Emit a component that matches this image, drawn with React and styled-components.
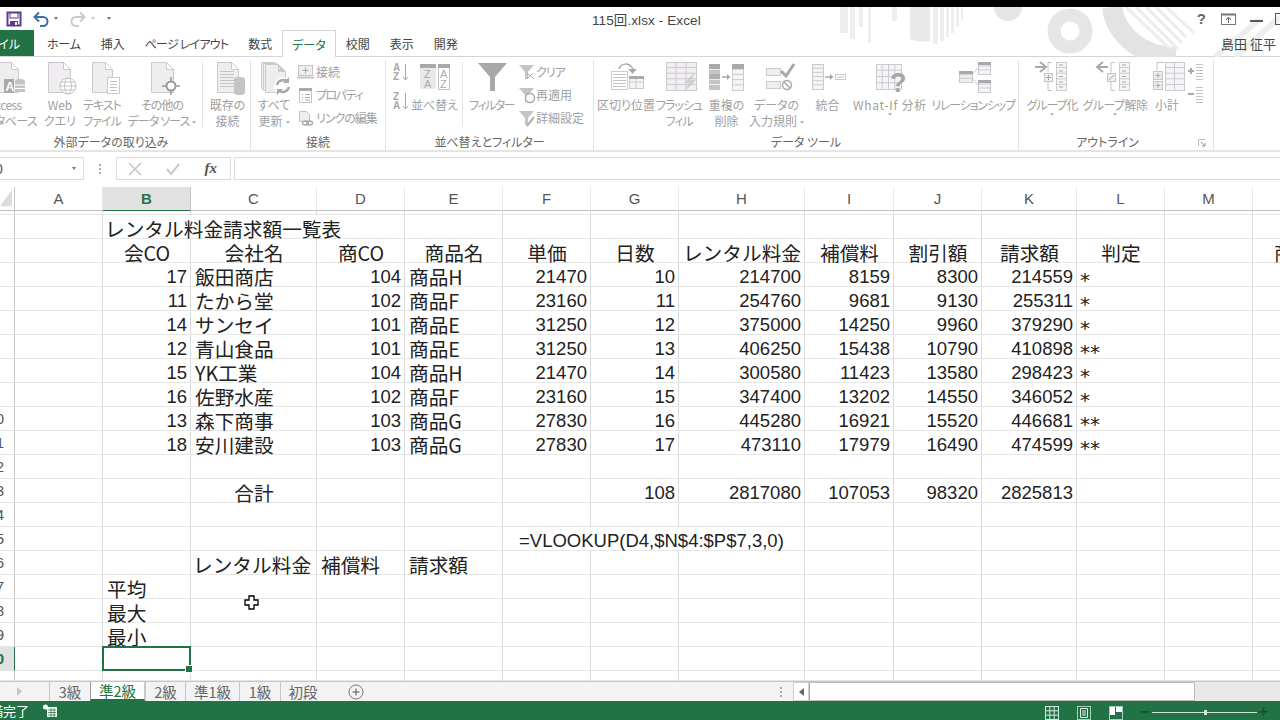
import React from "react";
import styled, { createGlobalStyle } from "styled-components";

const CJK = '"Noto Sans CJK JP", "Liberation Sans", sans-serif';
const LAT = '"Liberation Sans", "Noto Sans CJK JP", sans-serif';
const OUT = "#cdcacf";
const PALE = "#efedf0";
const MID = "#c4c4c4";
const DK = "#a9a9a9";
const GREEN = "#217346";

const Global = createGlobalStyle`
  html, body { margin: 0; padding: 0; background: #fff; }
  * { box-sizing: border-box; }
`;

const Page = styled.div`
  width: 1280px;
  height: 720px;
  display: flex;
  flex-direction: column;
  overflow: hidden;
  background: #fff;
  font-family: ${CJK};
  font-feature-settings: "palt";
`;
const BlackBar = styled.div`
  height: 7px;
  flex: none;
  background: #000;
`;
const Header = styled.header`
  position: relative;
  height: 50px;
  flex: none;
  display: flex;
  flex-direction: column;
  border-bottom: 1px solid #d4d4d4;
`;
const Pattern = styled.svg`
  position: absolute;
  left: 830px;
  top: 0;
`;
const TitleBar = styled.div`
  position: relative;
  height: 24px;
  display: grid;
  grid-template-columns: 592px auto 1fr;
  align-items: center;
`;
const Qat = styled.div`
  display: flex;
  align-items: center;
  padding-left: 6px;
  gap: 2px;
`;
const QatCaret = styled.span`
  width: 0;
  height: 0;
  margin: 0 ${(p) => p.$m ?? 6}px 0 3px;
  border-left: 2.5px solid transparent;
  border-right: 2.5px solid transparent;
  border-top: 3px solid ${(p) => p.$c || "#777"};
`;
const UndoIcon = styled.svg`
  margin-left: 9px;
`;
const Title = styled.div`
  font-size: 13.5px;
  color: #444;
  font-family: ${LAT};
  letter-spacing: 0.1px;
`;
const WinControls = styled.div`
  display: flex;
  justify-content: flex-end;
  align-items: center;
  gap: 12px;
  margin-right: -8px;
  color: #555;
`;
const Help = styled.span`
  font: 700 15px ${LAT};
  color: #666;
  margin-right: 3px;
`;
const MinimizeIcon = styled.svg`
  margin: 6px 0 0 2px;
`;
const TabRow = styled.nav`
  position: relative;
  flex: 1;
  display: flex;
  align-items: stretch;
  font-size: 12px;
  color: #444;
`;
const FileTab = styled.div`
  width: 34px;
  display: flex;
  justify-content: flex-end;
  align-items: center;
  overflow: hidden;
  padding-right: 14px;
  margin-right: 3px;
  background: ${GREEN};
  color: #fff;
  white-space: nowrap;
`;
const Tab = styled.div`
  padding: 0 10px;
  display: flex;
  align-items: center;
  white-space: nowrap;
  letter-spacing: ${(p) => p.$ls ?? 0}px;
  ${(p) =>
    p.$active &&
    `color:${GREEN};background:#fff;border:1px solid #d4d4d4;border-bottom:0;margin:0 0 -1px;padding:0 9px;height:27px;`}
`;
const UserName = styled.div`
  margin-left: auto;
  padding-right: 4px;
  align-self: center;
  font-size: 13px;
  color: #444;
  white-space: pre;
`;
const Ribbon = styled.section`
  height: 95px;
  flex: none;
  display: flex;
  border-bottom: 2px solid #e4e4e4;
  color: #a0a0a0;
  font-size: 12px;
`;
const Group = styled.div`
  position: relative;
  width: ${(p) => p.$w}px;
  flex: none;
  display: flex;
  flex-direction: column;
  margin-top: 3px;
  border-right: 1px solid #e2e2e2;
`;
const GroupBody = styled.div`
  flex: 1;
  min-height: 0;
  display: flex;
  justify-content: flex-end;
  overflow: hidden;
`;
const GroupLabel = styled.div`
  height: 17px;
  flex: none;
  line-height: 17px;
  text-align: center;
  font-size: 12px;
  color: #666;
  white-space: nowrap;
  padding-right: ${(p) => p.$shift || 0}px;
`;
const BigButton = styled.div`
  width: ${(p) => p.$w}px;
  flex: none;
  display: flex;
  flex-direction: column;
  align-items: center;
  text-align: center;
`;
const IconSlot = styled.div`
  width: 44px;
  height: 37px;
  flex: none;
`;
const BigLabel = styled.div`
  line-height: 16px;
  white-space: nowrap;
  letter-spacing: ${(p) => p.$ls || 0}px;
`;
const Caret = styled.span`
  display: inline-block;
  width: 0;
  height: 0;
  vertical-align: middle;
  margin-left: ${(p) => p.$ml ?? 3}px;
  border-left: 2.5px solid transparent;
  border-right: 2.5px solid transparent;
  border-top: 3px solid #b5b5b5;
`;
const InnerSep = styled.div`
  width: 1px;
  flex: none;
  margin: 2px ${(p) => p.$r || 2}px 6px ${(p) => p.$l || 2}px;
  background: #e4e4e4;
`;
const SmallColumn = styled.div`
  width: ${(p) => p.$w}px;
  flex: none;
  display: flex;
  flex-direction: column;
  padding-left: ${(p) => p.$pl || 0}px;
  gap: ${(p) => p.$gap || 0}px;
`;
const SmallItem = styled.div`
  height: 23px;
  display: flex;
  align-items: center;
  gap: ${(p) => p.$gap ?? 2}px;
  white-space: nowrap;
  letter-spacing: ${(p) => p.$ls || 0}px;
`;
const Launcher = styled.svg`
  position: absolute;
  right: 7px;
  bottom: 3px;
`;
const Gap = styled.div`
  height: ${(p) => p.$h}px;
  flex: none;
`;
const FormulaBar = styled.div`
  height: 23px;
  flex: none;
  display: flex;
  align-items: stretch;
`;
const NameBox = styled.div`
  width: 84px;
  display: flex;
  justify-content: space-between;
  align-items: center;
  padding-right: 7px;
  border: 1px solid #dcdcdc;
  border-left: 0;
  color: #555;
  font: 14px ${LAT};
`;
const NameClip = styled.span`
  margin-left: -5px;
`;
const Dots = styled.div`
  width: 32px;
  display: flex;
  flex-direction: column;
  align-items: center;
  justify-content: center;
  gap: 2px;
`;
const Dot = styled.i`
  width: 2px;
  height: 2px;
  background: #aaa;
`;
const FxBox = styled.div`
  width: 115px;
  margin-right: 3px;
  display: flex;
  align-items: center;
  justify-content: space-between;
  padding: 0 13px 0 11px;
  border: 1px solid #dcdcdc;
`;
const Fx = styled.span`
  font: italic 700 15px "Liberation Serif", serif;
  color: #555;
`;
const FormulaInput = styled.div`
  flex: 1;
  border: 1px solid #dcdcdc;
  border-right: 0;
`;
const Sheet = styled.div`
  position: relative;
  flex: 1;
  min-height: 0;
  overflow: hidden;
  display: grid;
  grid-template-columns: 15px 88px 88px 126px 88px 98px 88px 88px 126px 89px 88px 95px 88px 88px 88px;
  grid-template-rows: 24px 4px repeat(19, 24px) 10px;
`;
const Corner = styled.div`
  border-right: 1px solid #c6c6c6;
  border-bottom: 1px solid #bfbfbf;
  display: flex;
  align-items: flex-end;
  justify-content: flex-end;
  padding: 0 2px 3px 0;
`;
const ColHead = styled.div`
  display: flex;
  align-items: center;
  justify-content: center;
  font: ${(p) => (p.$sel ? 700 : 400)} 15px ${LAT};
  color: ${(p) => (p.$sel ? GREEN : "#555")};
  background: ${(p) => (p.$sel ? "#e1e1e1" : "#fff")};
  border-right: 1px solid ${(p) => (p.$sel ? "#c8c8c8" : "#e8e8e8")};
  border-bottom: 1px solid ${(p) => (p.$sel ? GREEN : "#bfbfbf")};
`;
const RowHead = styled.div`
  display: flex;
  justify-content: flex-end;
  align-items: center;
  overflow: hidden;
  padding-right: 10px;
  font: ${(p) => (p.$sel ? 700 : 400)} 15px ${LAT};
  color: ${(p) => (p.$sel ? GREEN : "#555")};
  background: ${(p) => (p.$sel ? "#e1e1e1" : "#fff")};
  border-right: 1px solid ${(p) => (p.$sel ? GREEN : "#c6c6c6")};
  border-bottom: 1px solid #e6e6e6;
`;
const Cell = styled.div`
  position: relative;
  grid-column: span ${(p) => p.$span || 1};
  display: flex;
  align-items: flex-end;
  justify-content: ${(p) =>
    p.$a === "r" ? "flex-end" : p.$a === "c" ? "center" : "flex-start"};
  padding: 0 3px 0 ${(p) => p.$pl ?? 4}px;
  border-right: 1px solid #dadada;
  border-bottom: 1px solid #e6e6e6;
  white-space: nowrap;
  color: #222;
  line-height: 18px;
  font-family: ${(p) => (p.$num ? LAT : CJK)};
  font-size: ${(p) => (p.$num ? "18.5px" : "19.7px")};
  font-feature-settings: normal;
`;
const Mark = styled.span`
  font: 20px/18px "DejaVu Sans", sans-serif;
  transform: translateY(3px);
`;
const SelectBox = styled.div`
  position: absolute;
  inset: -1px -1px -1px -1px;
  border: 2px solid ${GREEN};
  background: #fff;
  z-index: 2;
  &::after {
    content: "";
    position: absolute;
    right: -4px;
    bottom: -4px;
    width: 6px;
    height: 6px;
    background: ${GREEN};
    border: 1px solid #fff;
  }
`;
const CursorIcon = styled.svg`
  position: absolute;
  left: 244px;
  top: 408px;
  z-index: 3;
`;
const TabsBar = styled.div`
  height: 20px;
  flex: none;
  display: flex;
  align-items: stretch;
  background: #f3f3f3;
  border-top: 1px solid #c6c6c6;
  font-size: 14.5px;
  color: #666;
`;
const Nav = styled.div`
  width: 49px;
  display: flex;
  align-items: center;
  justify-content: flex-end;
  padding-right: 27px;
`;
const SheetTab = styled.div`
  width: ${(p) => p.$w}px;
  flex: none;
  display: flex;
  align-items: center;
  justify-content: center;
  white-space: nowrap;
  border-left: 1px solid ${(p) => (p.$active ? "transparent" : "#c8c8c8")};
  ${(p) =>
    p.$active &&
    `background:#fff;color:${GREEN};border-bottom:2px solid ${GREEN};border-left:1px solid #9a9a9a;border-right:1px solid #c8c8c8;`}
`;
const AddSheet = styled.svg`
  margin: 2px 0 0 23px;
`;
const ScrollZone = styled.div`
  margin-left: auto;
  display: flex;
  align-items: stretch;
  width: 500px;
`;
const ScrollDots = styled.div`
  width: 13px;
  display: flex;
  flex-direction: column;
  align-items: flex-start;
  justify-content: center;
  gap: 2px;
`;
const ScrollArrow = styled.div`
  width: 16px;
  background: #fff;
  border: 1px solid #d0d0d0;
  display: flex;
  align-items: center;
  justify-content: center;
  margin: 0;
`;
const Thumb = styled.div`
  width: 386px;
  background: #fff;
  border: 1px solid #bdbdbd;
  border-left-color: #aaa;
`;
const Track = styled.div`
  flex: 1;
  background: #e9e9e9;
`;
const StatusBar = styled.footer`
  height: 19px;
  flex: none;
  display: flex;
  align-items: center;
  background: ${GREEN};
  color: #fff;
  font-size: 13px;
  overflow: hidden;
`;
const StatusText = styled.div`
  width: 29px;
  display: flex;
  justify-content: flex-end;
  overflow: hidden;
  white-space: nowrap;
`;
const MacroIcon = styled.svg`
  margin-left: 14px;
`;
const ViewIcons = styled.div`
  margin-left: auto;
  display: flex;
  gap: 18px;
  align-items: flex-start;
  padding-top: 5px;
  align-self: stretch;
`;
const Zoom = styled.div`
  display: flex;
  align-items: center;
  margin: 0 12px 0 17px;
  color: #14532f;
  font: 700 16px ${LAT};
  gap: 2px;
  padding-top: 3px;
`;
const ZoomTrack = styled.div`
  position: relative;
  width: 105px;
  height: 1px;
  background: #cfe3d7;
  &::after {
    content: "";
    position: absolute;
    left: 52px;
    top: -2px;
    width: 3px;
    height: 5px;
    background: #cfe3d7;
  }
`;

/* ---------- icons ---------- */
const Svg = ({ children, w = 44, h = 37 }) => (
  <svg width={w} height={h} viewBox={`0 0 ${w} ${h}`} fill="none">
    {children}
  </svg>
);
const Doc = ({ x, w = 22, y = 2, h = 30, f = 7 }) => (
  <path
    d={`M${x + 0.5} ${y + 0.5}h${w - f}l${f} ${f}v${h - f}h-${w}z M${x + w - f + 0.5} ${y + 0.5}v${f}h${f}`}
    fill={PALE}
    stroke={OUT}
  />
);
const Lines = ({ x, y, w, n, step = 3, c = MID }) => (
  <path
    d={Array.from({ length: n }, (_, i) => `M${x} ${y + i * step + 0.5}h${w}`).join("")}
    stroke={c}
  />
);
const Table = ({ x, y, w, h, cols = 2, rows = 4, f = "#f5f4f6", s = OUT }) => {
  let d = "";
  for (let i = 1; i < cols; i++) d += `M${x + (w * i) / cols} ${y}v${h}`;
  for (let i = 1; i < rows; i++) d += `M${x} ${y + (h * i) / rows}h${w}`;
  return (
    <g>
      <rect x={x + 0.5} y={y + 0.5} width={w} height={h} fill={f} stroke={s} />
      <path d={d} stroke={s} />
    </g>
  );
};
const Funnel = () => (
  <Svg w={18} h={18}>
    <path d="M1 2h15l-6 7v7H7V9z" fill={MID} />
    <path d="M9 10l7 6M15 10l-6 6" stroke="#aaa" />
  </Svg>
);
const IAccess = () => (
  <Svg>
    <Doc x={13} w={22} />
    <rect x={21} y={19} width={10} height={14} fill={DK} />
    <text x={22.5} y={31} fontSize="12" fontFamily="Liberation Sans" fontWeight="700" fill="#fff">A</text>
    <ellipse cx={37} cy={21} rx={5} ry={2} fill={MID} />
    <rect x={32} y={21} width={10} height={11} fill={MID} />
    <path d="M32 25h10M32 28.500h10" stroke="#fff" />
  </Svg>
);
const IWeb = () => (
  <Svg>
    <Doc x={10} />
    <circle cx={30} cy={26} r={8} fill="#fff" stroke={MID} />
    <ellipse cx={30} cy={26} rx={3.5} ry={8} stroke={MID} />
    <path d="M22 26h16M23 22h14M23 30h14" stroke={MID} />
  </Svg>
);
const IText = () => (
  <Svg>
    <Doc x={12} w={20} />
    <rect x={27.500} y={17.500} width={12} height={16} fill="#fff" stroke={OUT} />
    <Lines x={30} y={21} w={7} n={4} />
  </Svg>
);
const IOther = () => (
  <Svg>
    <Doc x={11} />
    <path d="M31 17v18M22 26h18" stroke="#999" strokeWidth="1.500" />
    <circle cx={31} cy={26} r={4.500} fill="#fff" stroke="#999" strokeWidth="2" />
  </Svg>
);
const IExisting = () => (
  <Svg>
    <Doc x={11} w={21} />
    <Lines x={14} y={11} w={14} n={6} step={3} />
    <ellipse cx={33.500} cy={19} rx={5.500} ry={2} fill={MID} />
    <rect x={28} y={19} width={11} height={14} fill={MID} />
    <ellipse cx={33.500} cy={33} rx={5.500} ry={2} fill={MID} />
  </Svg>
);
const IRefresh = () => (
  <Svg>
    <Doc x={9} w={20} h={26} />
    <Doc x={11} w={20} h={27} y={3} />
    <Doc x={13} w={20} h={28} y={4} />
    <circle cx={31} cy={26} r={9} fill="#fff" />
    <path d="M25 25a6.500 6.500 0 0 1 11-3M37 27a6.500 6.500 0 0 1-11 3" stroke={DK} strokeWidth="2.500" />
    <path d="M37 17v6h-6zM25 35v-6h6z" fill={DK} />
  </Svg>
);
const IConn = () => (
  <Svg w={17} h={16}>
    <rect x={1.500} y={1.500} width={14} height={10} fill={PALE} stroke={MID} />
    <path d="M8.500 3.500v6M5.500 6.500h6" stroke={DK} />
    <path d="M0 13.500h17" stroke={MID} strokeWidth="2" />
  </Svg>
);
const IProp = () => (
  <Svg w={17} h={16}>
    <rect x={2.500} y={1.500} width={12} height={14} fill="#fff" stroke={MID} />
    <rect x={2} y={1} width={13} height={3} fill={DK} />
    <path d="M5 7.500h1M8 7.500h5M5 10.500h1M8 10.500h5M5 13h1M8 13h5" stroke={DK} />
  </Svg>
);
const ILink = () => (
  <Svg w={17} h={16}>
    <path d="M2.500 1.500h7l3 3v7h-10z" fill={PALE} stroke={MID} />
    <ellipse cx={8.500} cy={13} rx={3} ry={2} stroke={DK} strokeWidth="1.300" />
    <ellipse cx={12.500} cy={13} rx={3} ry={2} stroke={DK} strokeWidth="1.300" />
  </Svg>
);
const SortSmall = ({ top, bottom }) => (
  <Svg w={20} h={24}>
    <text x={3} y={11} fontSize="10" fontWeight="700" fontFamily="Liberation Sans" fill="#a8a8a8">{top}</text>
    <text x={3} y={20} fontSize="10" fontWeight="700" fontFamily="Liberation Sans" fill="#a8a8a8">{bottom}</text>
    <path d="M15.500 4v16M13 17l2.500 3 2.500-3" stroke="#a8a8a8" />
  </Svg>
);
const ISort = () => (
  <Svg>
    <rect x={7} y={4} width={16} height={25} fill="#e9e9e9" />
    <rect x={25.500} y={4.500} width={11} height={25} fill="#fff" stroke={MID} />
    <rect x={25} y={4} width={12} height={4} fill={DK} />
    <rect x={7} y={4} width={16} height={4} fill={DK} />
    <text x={27} y={18} fontSize="11" fontFamily="Liberation Sans" fill="#aaa">A</text>
    <text x={27} y={28} fontSize="11" fontFamily="Liberation Sans" fill="#aaa">Z</text>
    <text x={11} y={18} fontSize="11" fontFamily="Liberation Sans" fill="#aaa">Z</text>
    <text x={11} y={28} fontSize="11" fontFamily="Liberation Sans" fill="#aaa">A</text>
  </Svg>
);
const IFilter = () => (
  <Svg>
    <path d="M8 3h29L25 17v14h-5V17z" fill="#a8a8a8" />
  </Svg>
);
const IColumns = () => (
  <Svg>
    <rect x={7.500} y={11.500} width={16} height={18} fill="#fff" stroke={OUT} />
    <Lines x={9} y={14} w={13} n={5} step={3} />
    <Table x={25} y={16} w={14} h={12} cols={2} rows={2} />
    <rect x={25} y={16} width={15} height={3} fill={DK} />
    <path d="M15 9c2-6 10-7 14 0" stroke={DK} strokeWidth="1.500" />
    <path d="M24 9h9l-4.500 5z" fill={DK} />
  </Svg>
);
const IFlash = () => (
  <Svg>
    <Table x={9} y={2} w={30} h={28} cols={3} rows={5} f="#f1eff2" />
    <path d="M37 13l-10 10h5l-5 9 12-12h-5l4-7z" fill="#cfcfcf" />
  </Svg>
);
const IDup = () => (
  <Svg>
    <rect x={4} y={4} width={11} height={26} fill={MID} />
    <path d="M4 9.500h11M4 14.500h11M4 19.500h11M4 24.500h11" stroke="#eee" />
    <rect x={4} y={4} width={11} height={5} fill={DK} />
    <rect x={4} y={14} width={11} height={5} fill="#b2b2b2" />
    <path d="M17 17h6" stroke={DK} strokeWidth="1.500" />
    <path d="M22 14l3.500 3-3.500 3z" fill={DK} />
    <Table x={27} y={4} w={11} h={26} cols={1} rows={5} />
    <rect x={27} y={4} width={12} height={5} fill={DK} />
  </Svg>
);
const IValid = () => (
  <Svg>
    <rect x={11.500} y={8.500} width={14} height={7} fill={PALE} stroke={OUT} />
    <rect x={11.500} y={21.500} width={14} height={7} fill={PALE} stroke={OUT} />
    <path d="M26 11l5 5 8-12" stroke={DK} strokeWidth="3" />
    <circle cx={32} cy={25} r={4.500} stroke={DK} strokeWidth="1.500" />
    <path d="M29 22l6 6" stroke={DK} strokeWidth="1.500" />
  </Svg>
);
const IConsol = () => (
  <Svg>
    <Table x={6} y={4} w={11} h={25} cols={1} rows={6} />
    <path d="M19 17h6" stroke={DK} strokeWidth="1.500" />
    <path d="M24 14l3.500 3-3.500 3z" fill={DK} />
    <rect x={29.500} y={14.500} width={10} height={5} fill="#fff" stroke={OUT} />
    <path d="M31 17h7" stroke={MID} />
  </Svg>
);
const IWhatIf = () => (
  <Svg>
    <Table x={8} y={4} w={25} h={25} cols={4} rows={4} />
    <text x={22} y={32} fontSize="27" fontWeight="700" fontFamily="Liberation Sans" fill="#a6a6a6">?</text>
  </Svg>
);
const IRel = () => (
  <Svg>
    <Table x={8} y={11} w={13} h={11} cols={1} rows={3} f="#eee" />
    <rect x={8} y={11} width={14} height={3} fill={DK} />
    <Table x={27} y={2} w={12} h={12} cols={1} rows={3} />
    <rect x={27} y={2} width={13} height={3} fill={DK} />
    <Table x={27} y={20} w={12} h={12} cols={1} rows={3} />
    <rect x={27} y={20} width={13} height={3} fill={DK} />
    <path d="M21 15l6-7M21 18l6 7" stroke={MID} />
  </Svg>
);
const IGroup = ({ left }) => (
  <Svg>
    {left ? (
      <g>
        <path d="M15 7H6" stroke={DK} strokeWidth="2" />
        <path d="M10 2L4 7l6 5" stroke={DK} strokeWidth="2" />
      </g>
    ) : (
      <g>
        <path d="M5 7h9" stroke={DK} strokeWidth="2" />
        <path d="M10 2l6 5-6 5" stroke={DK} strokeWidth="2" />
      </g>
    )}
    <path d="M22 2.500h-4v10M18 21v9.500h4" stroke={MID} />
    <rect x={14.500} y={13.500} width={8} height={8} fill="#eee" stroke={MID} />
    <path d={left ? "M16 20l5-5" : "M18.500 15v5M16 17.500h5"} stroke={DK} />
    <Table x={26} y={2} w={10} h={28} cols={1} rows={5} />
    <path d="M29 5h4M29 11h4M29 16.500h4M29 22h4M29 27h4" stroke={DK} />
  </Svg>
);
const ISub = () => (
  <Svg>
    <path d="M19 2.500h-7v8" stroke={MID} />
    <Table x={20} y={2} w={19} h={28} cols={2} rows={5} />
    <rect x={8.500} y={11.500} width={9} height={8} fill="#eee" stroke={MID} />
    <rect x={8.500} y={21.500} width={9} height={8} fill="#eee" stroke={MID} />
    <path d="M13 13v5M10.500 15.500h5M13 23v5M10.500 25.500h5" stroke={DK} />
  </Svg>
);
const IShow = ({ minus }) => (
  <Svg w={17} h={23}>
    <path d={minus ? "M1 11h6" : "M1 11h6M4 8v6"} stroke="#aaa" strokeWidth="2" />
    <Lines x={9} y={4} w={7} n={6} step={3} />
  </Svg>
);
const IFilterReapply = () => (
  <Svg w={18} h={18}>
    <path d="M1 2h15l-6 7v7H7V9z" fill={MID} />
    <circle cx={12} cy={12} r={4.500} fill="#fff" stroke={DK} strokeWidth="1.500" />
  </Svg>
);
const IFilterAdv = () => (
  <Svg w={18} h={18}>
    <path d="M1 2h15l-6 7v7H7V9z" fill={MID} />
    <path d="M16 8l-7 9" stroke={DK} strokeWidth="2" />
  </Svg>
);

const Big = ({ w, icon, lines, caret, ls, children }) => (
  <BigButton $w={w}>
    <IconSlot>{icon}</IconSlot>
    {lines.map((l, i) => (
      <BigLabel key={i} $ls={ls}>
        {l}
        {caret && i === lines.length - 1 ? <Caret /> : null}
      </BigLabel>
    ))}
    {children}
  </BigButton>
);

/* ---------- sheet data ---------- */
const COLS = ["B", "C", "D", "E", "F", "G", "H", "I", "J", "K", "L", "M", "N"];
const c = (t) => ({ t, a: "c" });
const l = (t) => ({ t, a: "l" });
const n = (t) => ({ t, a: "r", num: true });
const ROWS = {
  2: { B: { t: "レンタル料金請求額一覧表", a: "l", span: 3, pl: 2 } },
  3: { B: c("会CO"), C: c("会社名"), D: c("商CO"), E: c("商品名"), F: c("単価"), G: c("日数"), H: c("レンタル料金"), I: c("補償料"), J: c("割引額"), K: c("請求額"), L: c("判定"), N: c("商CO") },
  13: { C: c("合計"), G: n("108"), H: n("2817080"), I: n("107053"), J: n("98320"), K: n("2825813") },
  15: { F: { t: "=VLOOKUP(D4,$N$4:$P$7,3,0)", a: "l", span: 3, num: true, pl: 16 } },
  16: { C: { t: "レンタル料金", a: "l", pl: 2 }, D: l("補償料"), E: l("請求額") },
  17: { B: l("平均") },
  18: { B: l("最大") },
  19: { B: l("最小") },
};
[
  ["17", "飯田商店", "104", "商品H", "21470", "10", "214700", "8159", "8300", "214559", "*"],
  ["11", "たから堂", "102", "商品F", "23160", "11", "254760", "9681", "9130", "255311", "*"],
  ["14", "サンセイ", "101", "商品E", "31250", "12", "375000", "14250", "9960", "379290", "*"],
  ["12", "青山食品", "101", "商品E", "31250", "13", "406250", "15438", "10790", "410898", "**"],
  ["15", "YK工業", "104", "商品H", "21470", "14", "300580", "11423", "13580", "298423", "*"],
  ["16", "佐野水産", "102", "商品F", "23160", "15", "347400", "13202", "14550", "346052", "*"],
  ["13", "森下商事", "103", "商品G", "27830", "16", "445280", "16921", "15520", "446681", "**"],
  ["18", "安川建設", "103", "商品G", "27830", "17", "473110", "17979", "16490", "474599", "**"],
].forEach((r, i) => {
  const row = {};
  COLS.slice(0, 11).forEach((k, j) => {
    row[k] = j === 1 || j === 3 ? l(r[j]) : j === 10 ? { t: r[j], a: "l", mark: true, pl: 3 } : n(r[j]);
  });
  ROWS[4 + i] = row;
});

const renderRow = (num) => {
  const data = ROWS[num] || {};
  const out = [];
  let skip = 0;
  COLS.forEach((k) => {
    if (skip > 0) {
      skip--;
      return;
    }
    const d = data[k];
    if (d && d.span) skip = d.span - 1;
    out.push(
      <Cell key={k} $a={d?.a} $span={d?.span} $num={d?.num} $pl={d?.pl}>
        {d?.mark ? <Mark>{d.t}</Mark> : d?.t}
        {num === 20 && k === "B" ? <SelectBox /> : null}
      </Cell>
    );
  });
  return out;
};

const SheetGrid = () => (
  <Sheet>
    <Corner>
      <svg width="13" height="18" viewBox="0 0 13 18">
        <path d="M13 0v18H0z" fill="#dcdcdc" />
      </svg>
    </Corner>
    {["A", ...COLS].map((k) => (
      <ColHead key={k} $sel={k === "B"}>{k}</ColHead>
    ))}
    <RowHead />
    {["A", ...COLS].map((k) => <Cell key={k} />)}
    {Array.from({ length: 19 }, (_, i) => i + 2).map((num) => (
      <React.Fragment key={num}>
        <RowHead $sel={num === 20}>{num >= 10 ? num : ""}</RowHead>
        <Cell />
        {renderRow(num)}
      </React.Fragment>
    ))}
    <RowHead />
    {["A", ...COLS].map((k) => <Cell key={k} />)}
    <CursorIcon width="16" height="16" viewBox="0 0 16 16">
      <path d="M5 1h5v4h4v5h-4v4H5v-4H1V5h4z" fill="#fff" stroke="#000" strokeWidth="1.300" />
    </CursorIcon>
  </Sheet>
);

export default function App() {
  return (
    <Page>
      <Global />
      <BlackBar />
      <Header>
        <Pattern width="450" height="50" viewBox="0 0 450 50">
          <g fill="#eeeeee">
            <rect x="10" y="0" width="8" height="26" />
            <rect x="20" y="0" width="5" height="32" />
            <rect x="29" y="0" width="4" height="20" />
            <rect x="38" y="0" width="3" height="36" />
            <rect x="62" y="0" width="5" height="14" />
            <path d="M80 0h20v34q-12 2-20-2z" fill="#e9e9e9" />
            <rect x="103" y="0" width="5" height="37" />
            <rect x="110" y="0" width="4" height="34" />
            <rect x="116" y="0" width="3" height="30" />
            <rect x="121" y="0" width="3" height="26" />
            <rect x="126" y="0" width="3" height="20" />
            <rect x="131" y="0" width="2" height="14" />
            <path d="M164 0a14 14 0 0 0 28 0z" fill="#e6e6e6" />
          </g>
          <circle cx="240" cy="24" r="16" fill="none" stroke="#e6e6e6" strokeWidth="13" />
          <path d="M282 0c4 28 30 50 64 50" fill="none" stroke="#e3e3e3" strokeWidth="20" />
          <g stroke="#ececec" strokeWidth="3" fill="none">
            <path d="M296 0l44 42M306 0l42 42M316 0l36 36M326 0l30 30M336 0l28 26" />
          </g>
          <g stroke="#eeeeee" strokeWidth="6">
            <path d="M405 50l45-40M385 50l45-38" />
          </g>
        </Pattern>
        <TitleBar>
          <Qat>
            <svg width="16" height="16" viewBox="0 0 16 16">
              <path d="M1.500 1.500h13v13h-13z" fill="#fff" stroke="#5c3b87" strokeWidth="2" />
              <rect x="4" y="2" width="8" height="5" fill="#fff" stroke="#5c3b87" />
              <rect x="4" y="10" width="8" height="5" fill="#5c3b87" />
              <rect x="9" y="11" width="2" height="3" fill="#fff" />
            </svg>
            <UndoIcon width="16" height="16" viewBox="0 0 16 16" fill="none">
              <path d="M2 6h8a4.500 4.500 0 0 1 0 9H7" stroke="#3c6ea8" strokeWidth="2" />
              <path d="M6 1.500L1.500 6 6 10.500" stroke="#3c6ea8" strokeWidth="2" />
            </UndoIcon>
            <QatCaret $m={10} />
            <svg width="16" height="16" viewBox="0 0 16 16" fill="none">
              <path d="M14 6H6a4.500 4.500 0 0 0 0 9h3" stroke="#c9c9c9" strokeWidth="2" />
              <path d="M10 1.500L14.500 6 10 10.500" stroke="#c9c9c9" strokeWidth="2" />
            </svg>
            <QatCaret $c="#c9c9c9" $m={7} />
            <QatCaret />
          </Qat>
          <Title>115回.xlsx - Excel</Title>
          <WinControls>
            <Help>?</Help>
            <svg width="15" height="12" viewBox="0 0 15 12" fill="none">
              <rect x=".5" y="1.500" width="14" height="10" stroke="#777" />
              <path d="M0 1.500h15" stroke="#777" strokeWidth="2" />
              <path d="M7.500 10V5M5 7l2.500-3L10 7" stroke="#666" />
            </svg>
            <MinimizeIcon width="13" height="4" viewBox="0 0 13 4">
              <rect width="13" height="2" fill="#555" />
            </MinimizeIcon>
            <svg width="13" height="12" viewBox="0 0 13 12" fill="none">
              <rect x=".5" y=".5" width="12" height="11" stroke="#555" />
            </svg>
          </WinControls>
        </TitleBar>
        <TabRow>
          <FileTab>ファイル</FileTab>
          <Tab $ls={-0.2}>ホーム</Tab>
          <Tab>挿入</Tab>
          <Tab $ls={-0.8}>ページ レイアウト</Tab>
          <Tab>数式</Tab>
          <Tab $active>データ</Tab>
          <Tab>校閲</Tab>
          <Tab>表示</Tab>
          <Tab>開発</Tab>
          <UserName>島田 征平</UserName>
        </TabRow>
      </Header>
      <Ribbon>
        <Group $w={251}>
          <GroupBody>
            <Big w={70} icon={<IAccess />} lines={["Access", "データベース"]} ls={-0.6} />
            <Big w={40} icon={<IWeb />} lines={["Web", "クエリ"]} />
            <Big w={44} icon={<IText />} lines={["テキスト", "ファイル"]} ls={-1} />
            <Big w={76} icon={<IOther />} lines={["その他の", "データ ソース"]} caret ls={-0.9} />
            <InnerSep $l={2} $r={2} />
            <Big w={45} icon={<IExisting />} lines={["既存の", "接続"]} />
          </GroupBody>
          <GroupLabel $shift={28}>外部データの取り込み</GroupLabel>
        </Group>
        <Group $w={135}>
          <GroupBody>
            <Big w={46} icon={<IRefresh />} lines={["すべて", "更新"]} caret />
            <SmallColumn $w={88}>
              <SmallItem><IConn />接続</SmallItem>
              <SmallItem $ls={-1.5}><IProp />プロパティ</SmallItem>
              <SmallItem $ls={-1}><ILink />リンクの編集</SmallItem>
            </SmallColumn>
          </GroupBody>
          <GroupLabel>接続</GroupLabel>
        </Group>
        <Group $w={208}>
          <GroupBody>
            <SmallColumn $w={21} $gap={6}>
              <SmallItem><SortSmall top="A" bottom="Z" /></SmallItem>
              <SmallItem><SortSmall top="Z" bottom="A" /></SmallItem>
            </SmallColumn>
            <Big w={47} icon={<ISort />} lines={["並べ替え"]} />
            <InnerSep $l={4} $r={2} />
            <Big w={53} icon={<IFilter />} lines={["フィルター"]} ls={-1.5} />
            <SmallColumn $w={75}>
              <SmallItem $gap={0} $ls={-1}><Funnel />クリア</SmallItem>
              <SmallItem $gap={0}><IFilterReapply />再適用</SmallItem>
              <SmallItem $gap={0}><IFilterAdv />詳細設定</SmallItem>
            </SmallColumn>
          </GroupBody>
          <GroupLabel>並べ替えとフィルター</GroupLabel>
        </Group>
        <Group $w={425}>
          <GroupBody>
            <Big w={58} icon={<IColumns />} lines={["区切り位置"]} />
            <Big w={48} icon={<IFlash />} lines={["フラッシュ", "フィル"]} ls={-1} />
            <Big w={47} icon={<IDup />} lines={["重複の", "削除"]} />
            <Big w={53} icon={<IValid />} lines={["データの", "入力規則"]} caret />
            <Big w={49} icon={<IConsol />} lines={["統合"]} />
            <Big w={76} icon={<IWhatIf />} lines={["What-If 分析"]} ls={0.7}>
              <Caret $ml={0} />
            </Big>
            <Big w={90} icon={<IRel />} lines={["リレーションシップ"]} ls={-1.2} />
          </GroupBody>
          <GroupLabel>データ ツール</GroupLabel>
        </Group>
        <Group $w={195}>
          <GroupBody>
            <Big w={62} icon={<IGroup />} lines={["グループ化"]} ls={-1}>
              <Caret $ml={0} />
            </Big>
            <Big w={64} icon={<IGroup left />} lines={["グループ解除"]} ls={-0.5}>
              <Caret $ml={0} />
            </Big>
            <Big w={40} icon={<ISub />} lines={["小計"]} />
            <SmallColumn $w={26}>
              <SmallItem><IShow /></SmallItem>
              <SmallItem><IShow minus /></SmallItem>
            </SmallColumn>
          </GroupBody>
          <GroupLabel $shift={17}>アウトライン</GroupLabel>
          <Launcher width="8" height="8" viewBox="0 0 8 8" fill="none">
            <path d="M.5 7V.5H7" stroke="#bbb" />
            <path d="M3 3l4 4M7 4v3H4" stroke="#999" />
          </Launcher>
        </Group>
      </Ribbon>
      <Gap $h={5} />
      <FormulaBar>
        <NameBox>
          <NameClip>0</NameClip>
          <QatCaret $m={0} />
        </NameBox>
        <Dots><Dot /><Dot /><Dot /></Dots>
        <FxBox>
          <svg width="14" height="14" viewBox="0 0 14 14" fill="none">
            <path d="M1 1l12 12M13 1L1 13" stroke="#c4c4c4" strokeWidth="1.500" />
          </svg>
          <svg width="14" height="14" viewBox="0 0 14 14" fill="none">
            <path d="M1 7l4 5 8-10" stroke="#c4c4c4" strokeWidth="2" />
          </svg>
          <Fx>fx</Fx>
        </FxBox>
        <FormulaInput />
      </FormulaBar>
      <Gap $h={7} />
      <SheetGrid />
      <TabsBar>
        <Nav>
          <svg width="5" height="9" viewBox="0 0 5 9">
            <path d="M0 0l5 4.500L0 9z" fill="#c4c4c4" />
          </svg>
        </Nav>
        <SheetTab $w={41}>3級</SheetTab>
        <SheetTab $w={55} $active>準2級</SheetTab>
        <SheetTab $w={40}>2級</SheetTab>
        <SheetTab $w={54}>準1級</SheetTab>
        <SheetTab $w={41}>1級</SheetTab>
        <SheetTab $w={45}>初段</SheetTab>
        <AddSheet width="16" height="16" viewBox="0 0 16 16" fill="none">
          <circle cx="8" cy="8" r="7" stroke="#777" />
          <path d="M8 4.500v7M4.500 8h7" stroke="#555" />
        </AddSheet>
        <ScrollZone>
          <ScrollDots><Dot /><Dot /><Dot /></ScrollDots>
          <ScrollArrow>
            <svg width="5" height="8" viewBox="0 0 5 8">
              <path d="M5 0v8L0 4z" fill="#666" />
            </svg>
          </ScrollArrow>
          <Thumb />
          <Track />
        </ScrollZone>
      </TabsBar>
      <StatusBar>
        <StatusText>準備完了</StatusText>
        <MacroIcon width="14" height="13" viewBox="0 0 14 13">
          <rect x="4" y="3" width="10" height="10" fill="#fff" />
          <path d="M5 6h8M5 8.500h8M5 11h8M8 4v9M11 4v9" stroke={GREEN} strokeWidth=".8" />
          <circle cx="2.500" cy="3" r="2.500" fill="#fff" />
        </MacroIcon>
        <ViewIcons>
          <svg width="14" height="14" viewBox="0 0 14 14" fill="none">
            <path d="M.5 0v14M4.800 0v14M9.200 0v14M13.500 0v14M0 .5h14M0 4.800h14M0 9.200h14M0 13.500h14" stroke="#d7ebdf" />
          </svg>
          <svg width="14" height="14" viewBox="0 0 14 14" fill="none">
            <rect x=".5" y=".5" width="13" height="13" stroke="#a6cdb6" />
            <path d="M3.500 2.500h7v9h-7zM5 5h4M5 7h4M5 9h4" stroke="#e3f0e8" />
          </svg>
          <svg width="14" height="14" viewBox="0 0 14 14" fill="none">
            <rect x=".5" y=".5" width="13" height="13" stroke="#a6cdb6" />
            <path d="M1 1h5v8H1zM7 1h6v5H7z" fill="#fff" />
          </svg>
        </ViewIcons>
        <Zoom>
          −<ZoomTrack />+
        </Zoom>
      </StatusBar>
    </Page>
  );
}
